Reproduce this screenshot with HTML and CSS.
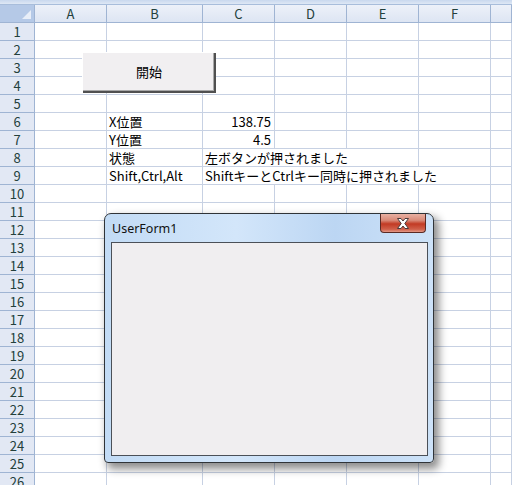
FILE: index.html
```html
<!DOCTYPE html>
<html lang="ja">
<head>
<meta charset="utf-8">
<title>Sheet</title>
<link rel="stylesheet" href="styles.css">
</head>
<body>
<div class="sheet">
  <div class="strip"></div>
  <div class="row head">
    <div class="corner"></div><div class="ch">A</div><div class="ch">B</div><div class="ch">C</div><div class="ch">D</div><div class="ch">E</div><div class="ch">F</div><div class="ch"></div>
  </div>
  <div class="row"><div class="rh">1</div><div class="c"></div><div class="c"></div><div class="c"></div><div class="c"></div><div class="c"></div><div class="c"></div><div class="c"></div></div>
  <div class="row"><div class="rh">2</div><div class="c"></div><div class="c"></div><div class="c"></div><div class="c"></div><div class="c"></div><div class="c"></div><div class="c"></div></div>
  <div class="row"><div class="rh">3</div><div class="c"></div><div class="c"></div><div class="c"></div><div class="c"></div><div class="c"></div><div class="c"></div><div class="c"></div></div>
  <div class="row"><div class="rh">4</div><div class="c"></div><div class="c"></div><div class="c"></div><div class="c"></div><div class="c"></div><div class="c"></div><div class="c"></div></div>
  <div class="row"><div class="rh">5</div><div class="c"></div><div class="c"></div><div class="c"></div><div class="c"></div><div class="c"></div><div class="c"></div><div class="c"></div></div>
  <div class="row"><div class="rh">6</div><div class="c"></div><div class="c">X位置</div><div class="c num">138.75</div><div class="c"></div><div class="c"></div><div class="c"></div><div class="c"></div></div>
  <div class="row"><div class="rh">7</div><div class="c"></div><div class="c">Y位置</div><div class="c num">4.5</div><div class="c"></div><div class="c"></div><div class="c"></div><div class="c"></div></div>
  <div class="row"><div class="rh">8</div><div class="c"></div><div class="c">状態</div><div class="c span3">左ボタンが押されました</div><div class="c"></div><div class="c"></div></div>
  <div class="row"><div class="rh">9</div><div class="c"></div><div class="c">Shift,Ctrl,Alt</div><div class="c span4">ShiftキーとCtrlキー同時に押されました</div><div class="c"></div></div>
  <div class="row"><div class="rh">10</div><div class="c"></div><div class="c"></div><div class="c"></div><div class="c"></div><div class="c"></div><div class="c"></div><div class="c"></div></div>
  <div class="row"><div class="rh">11</div><div class="c"></div><div class="c"></div><div class="c"></div><div class="c"></div><div class="c"></div><div class="c"></div><div class="c"></div></div>
  <div class="row"><div class="rh">12</div><div class="c"></div><div class="c"></div><div class="c"></div><div class="c"></div><div class="c"></div><div class="c"></div><div class="c"></div></div>
  <div class="row"><div class="rh">13</div><div class="c"></div><div class="c"></div><div class="c"></div><div class="c"></div><div class="c"></div><div class="c"></div><div class="c"></div></div>
  <div class="row"><div class="rh">14</div><div class="c"></div><div class="c"></div><div class="c"></div><div class="c"></div><div class="c"></div><div class="c"></div><div class="c"></div></div>
  <div class="row"><div class="rh">15</div><div class="c"></div><div class="c"></div><div class="c"></div><div class="c"></div><div class="c"></div><div class="c"></div><div class="c"></div></div>
  <div class="row"><div class="rh">16</div><div class="c"></div><div class="c"></div><div class="c"></div><div class="c"></div><div class="c"></div><div class="c"></div><div class="c"></div></div>
  <div class="row"><div class="rh">17</div><div class="c"></div><div class="c"></div><div class="c"></div><div class="c"></div><div class="c"></div><div class="c"></div><div class="c"></div></div>
  <div class="row"><div class="rh">18</div><div class="c"></div><div class="c"></div><div class="c"></div><div class="c"></div><div class="c"></div><div class="c"></div><div class="c"></div></div>
  <div class="row"><div class="rh">19</div><div class="c"></div><div class="c"></div><div class="c"></div><div class="c"></div><div class="c"></div><div class="c"></div><div class="c"></div></div>
  <div class="row"><div class="rh">20</div><div class="c"></div><div class="c"></div><div class="c"></div><div class="c"></div><div class="c"></div><div class="c"></div><div class="c"></div></div>
  <div class="row"><div class="rh">21</div><div class="c"></div><div class="c"></div><div class="c"></div><div class="c"></div><div class="c"></div><div class="c"></div><div class="c"></div></div>
  <div class="row"><div class="rh">22</div><div class="c"></div><div class="c"></div><div class="c"></div><div class="c"></div><div class="c"></div><div class="c"></div><div class="c"></div></div>
  <div class="row"><div class="rh">23</div><div class="c"></div><div class="c"></div><div class="c"></div><div class="c"></div><div class="c"></div><div class="c"></div><div class="c"></div></div>
  <div class="row"><div class="rh">24</div><div class="c"></div><div class="c"></div><div class="c"></div><div class="c"></div><div class="c"></div><div class="c"></div><div class="c"></div></div>
  <div class="row"><div class="rh">25</div><div class="c"></div><div class="c"></div><div class="c"></div><div class="c"></div><div class="c"></div><div class="c"></div><div class="c"></div></div>
  <div class="row"><div class="rh">26</div><div class="c"></div><div class="c"></div><div class="c"></div><div class="c"></div><div class="c"></div><div class="c"></div><div class="c"></div></div>

  <button class="start">開始</button>

  <div class="form">
    <div class="titlebar">
      <span class="title">UserForm1</span>
      <div class="close">
        <svg width="14" height="11" viewBox="0 0 14 11"><path d="M1.5 0.5 H5 L7 3 L9 0.5 H12.5 L8.8 5.5 L12.5 10.5 H9 L7 8 L5 10.5 H1.5 L5.2 5.5 Z" fill="#ffffff" stroke="#4a3a3a" stroke-width="1"/></svg>
      </div>
    </div>
    <div class="client"></div>
  </div>
</div>
</body>
</html>
```
FILE: styles.css
```css
html, body {
  margin: 0;
  padding: 0;
  background: #ffffff;
}
body {
  width: 512px;
  height: 485px;
  overflow: hidden;
  font-family: "Noto Sans CJK JP", "Noto Sans", sans-serif;
  font-size: 13px;
  color: #000;
}
.sheet {
  position: relative;
  width: 512px;
  height: 485px;
  overflow: hidden;
}
.strip {
  height: 4px;
  background: linear-gradient(#c9d8ee, #dfe8f5);
  border-bottom: 1px solid #a8bddb;
}
.row {
  display: grid;
  grid-template-columns: 35px 72px 96px 72px 72px 72px 72px 1fr;
  height: 18px;
}
.c {
  box-sizing: border-box;
  border-right: 1px solid #c7d1e3;
  border-bottom: 1px solid #c7d1e3;
  height: 18px;
  line-height: 18px;
  padding-left: 2px;
  white-space: nowrap;
  overflow: visible;
}
.num {
  text-align: right;
  padding-right: 3px;
}
.span3 { grid-column: span 3; }
.span4 { grid-column: span 4; }
.head .ch, .rh, .corner {
  box-sizing: border-box;
  border-right: 1px solid #9fb4d3;
  border-bottom: 1px solid #9fb4d3;
  height: 18px;
  line-height: 17px;
  text-align: center;
  color: #23403c;
  font-size: 13px;
}
.head .ch {
  background: linear-gradient(#edf1f9, #dde5f3);
}
.rh {
  background: #e2e8f4;
  line-height: 18px;
}
.corner {
  background: #b5c9e7;
  position: relative;
}
.corner::after {
  content: "";
  position: absolute;
  right: 3px;
  bottom: 3px;
  width: 0;
  height: 0;
  border-left: 9px solid transparent;
  border-bottom: 9px solid #e8eef8;
}
.start {
  position: absolute;
  left: 82px;
  top: 52px;
  width: 134px;
  height: 41px;
  margin: 0;
  padding: 0;
  border: none;
  background: #f1eff1;
  box-shadow: inset 1px 1px 0 #ffffff, inset -2px -2px 0 #505050, inset -3px -3px 0 #a8a8a8;
  font-family: "Noto Sans CJK JP", sans-serif;
  font-size: 13px;
  color: #000;
  padding-bottom: 2px;
}
.form {
  position: absolute;
  left: 104px;
  top: 213px;
  width: 330px;
  height: 250px;
  box-sizing: border-box;
  border: 1px solid #303438;
  border-radius: 7px 7px 4px 4px;
  background: linear-gradient(90deg, #c2dbf5, #d3e6fa 40%, #bcd6f3 70%, #cde2f8);
  box-shadow: 4px 5px 9px 1px rgba(0, 0, 0, 0.45);
  display: flex;
  flex-direction: column;
  padding: 0 5px 6px 6px;
}
.titlebar {
  height: 28px;
  display: flex;
  align-items: flex-start;
  justify-content: space-between;
}
.title {
  font-family: "Noto Sans", "Liberation Sans", sans-serif;
  font-size: 12.5px;
  color: #111;
  margin-left: 1px;
  margin-top: 6px;
}
.close {
  width: 46px;
  height: 19px;
  box-sizing: border-box;
  margin-right: 2px;
  border: 1px solid #5a2a24;
  border-top: none;
  border-radius: 0 0 4px 4px;
  background: linear-gradient(#e8b0a2 0%, #d98a78 35%, #c23a24 55%, #d0604a 85%, #e49a88 100%);
  display: flex;
  align-items: center;
  justify-content: center;
}
.close svg {
  display: block;
}
.client {
  flex: 1;
  box-sizing: border-box;
  border: 1px solid #4b5058;
  background: #f0eef0;
}
```
